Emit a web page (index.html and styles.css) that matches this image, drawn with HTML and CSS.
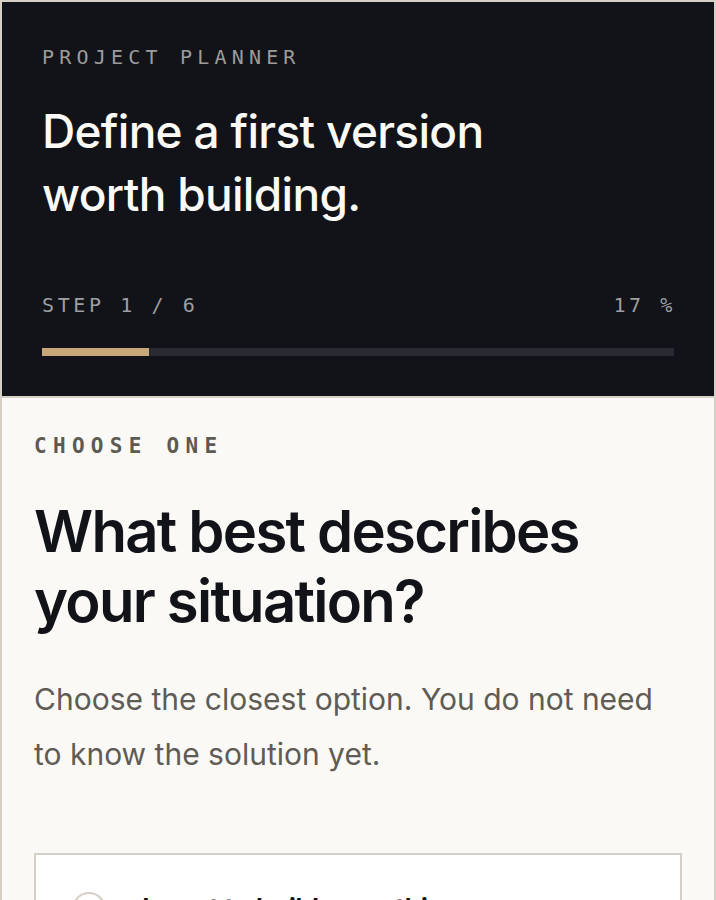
FILE: index.html
```html
<!DOCTYPE html>
<html lang="en">
<head>
<meta charset="utf-8">
<title>Project Planner</title>
<link rel="stylesheet" href="styles.css">
</head>
<body>
<div class="frame">
  <header class="hero">
    <p class="eyebrow">PROJECT PLANNER</p>
    <h1 class="hero-title">Define a first version worth building.</h1>
    <div class="progress-meta">
      <span>STEP 1 / 6</span>
      <span class="pct">17 %</span>
    </div>
    <div class="track"><div class="fill" style="width:17%"></div></div>
  </header>
  <main class="body">
    <p class="kicker">CHOOSE ONE</p>
    <h2 class="question">What best describes your situation?</h2>
    <p class="lead">Choose the closest option. You do not need to know the solution yet.</p>
    <div class="options">
      <label class="option">
        <span class="radio"></span>
        <span class="option-text">I want to build something new</span>
      </label>
    </div>
  </main>
</div>
</body>
</html>
```

FILE: styles.css
```css
html, body {
  margin: 0;
  padding: 0;
}
body {
  background: #d5cfc6;
  font-family: Inter, "Noto Sans", sans-serif;
}
.frame {
  border: 2px solid #d5cfc6;
  min-height: 896px;
  background: #faf9f6;
}
.hero {
  background: #111318;
  padding: 43px 40px 40px;
  border-bottom: 2px solid #d5cfc6;
}
.eyebrow {
  margin: 0;
  font-family: "DejaVu Sans Mono", monospace;
  font-size: 20px;
  line-height: 24px;
  letter-spacing: 0.26em;
  color: #9c9c9c;
}
.hero-title {
  margin: 31px 0 0;
  max-width: 500px;
  font-size: 46px;
  line-height: 63px;
  font-weight: 500;
  letter-spacing: -0.015em;
  color: #fbfaf7;
}
.progress-meta {
  margin-top: 67px;
  display: flex;
  justify-content: space-between;
  font-family: "DejaVu Sans Mono", monospace;
  font-size: 20px;
  line-height: 24px;
  letter-spacing: 0.18em;
  color: #9d9fa3;
}
.pct {
  margin-right: -2px;
}
.track {
  margin-top: 31px;
  height: 8px;
  background: #272a30;
}
.fill {
  height: 100%;
  background: #c8a878;
}
.body {
  padding: 36px 32px 40px;
}
.kicker {
  margin: 0;
  font-family: "DejaVu Sans Mono", monospace;
  font-weight: bold;
  font-size: 21px;
  line-height: 24px;
  letter-spacing: 0.3em;
  color: #5d5a52;
}
.question {
  margin: 38px 0 0;
  max-width: 620px;
  font-size: 58px;
  line-height: 70px;
  font-weight: 600;
  letter-spacing: -0.03em;
  color: #111318;
}
.lead {
  margin: 36px 0 0;
  max-width: 640px;
  font-size: 30px;
  line-height: 55px;
  font-weight: 400;
  letter-spacing: 0;
  color: #5f5c55;
}
.options {
  margin-top: 71px;
}
.option {
  display: flex;
  align-items: center;
  gap: 36px;
  background: #ffffff;
  border: 2px solid #d5cfc6;
  padding: 36px 36px;
}
.radio {
  flex: none;
  width: 30px;
  height: 30px;
  border: 2px solid #d5cfc6;
  border-radius: 50%;
}
.option-text {
  font-size: 28px;
  line-height: 36px;
  font-weight: 600;
  letter-spacing: -0.03em;
  color: #111318;
}
```
